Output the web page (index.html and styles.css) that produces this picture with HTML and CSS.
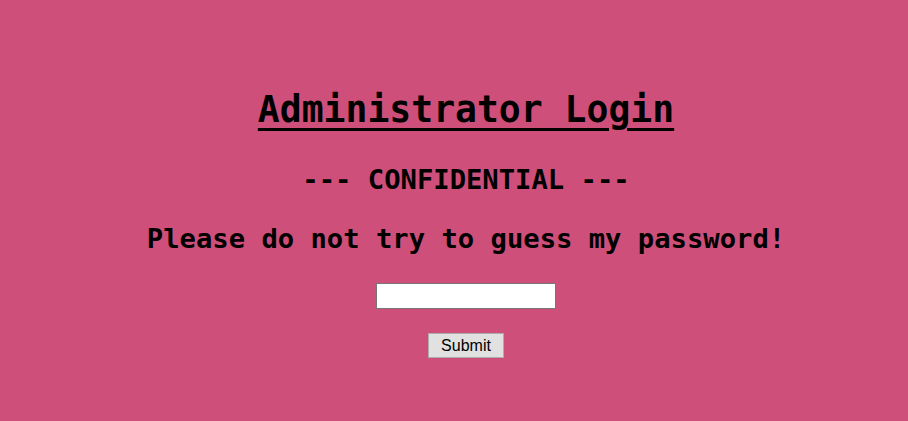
FILE: index.html
```html
<!DOCTYPE html>
<html>
<head>
<meta charset="utf-8">
<link rel="stylesheet" href="styles.css">
</head>
<body>
<main class="page">
  <h1 class="title">Administrator Login</h1>
  <h2 class="sub">--- CONFIDENTIAL ---</h2>
  <h2 class="warn">Please do not try to guess my password!</h2>
  <form class="form" onsubmit="return false">
    <input class="pw" type="password">
    <button class="btn" type="submit">Submit</button>
  </form>
</main>
</body>
</html>
```
FILE: styles.css
```css
html, body {
  margin: 0;
  padding: 0;
  background: #ce4f7a;
  height: 100%;
}
.page {
  display: flex;
  flex-direction: column;
  align-items: center;
  padding-top: 90px;
  padding-left: 24px;
  font-family: "DejaVu Sans Mono", "Liberation Mono", monospace;
  color: #000;
}
.title {
  margin: 0;
  font-size: 36.4px;
  line-height: 40px;
  font-weight: bold;
  text-decoration: underline;
  text-decoration-thickness: 3px;
  text-underline-offset: 6px;
}
.sub, .warn {
  margin: 0;
  font-size: 27.2px;
  line-height: 32px;
  font-weight: bold;
}
.sub { margin-top: 34px; }
.warn { margin-top: 27px; }
.form {
  display: flex;
  flex-direction: column;
  align-items: center;
  margin-top: 28px;
}
.pw {
  box-sizing: border-box;
  width: 180px;
  height: 26px;
  margin: 0;
  border: 1px solid #767676;
  background: #fff;
  padding: 0 2px;
}
.btn {
  box-sizing: border-box;
  margin-top: 24px;
  width: 76px;
  height: 25px;
  padding: 0;
  font-family: "Liberation Sans", Arial, sans-serif;
  font-size: 16px;
  color: #000;
  background: #e1e1e1;
  border: 1px solid #adadad;
  border-radius: 0;
}
```
